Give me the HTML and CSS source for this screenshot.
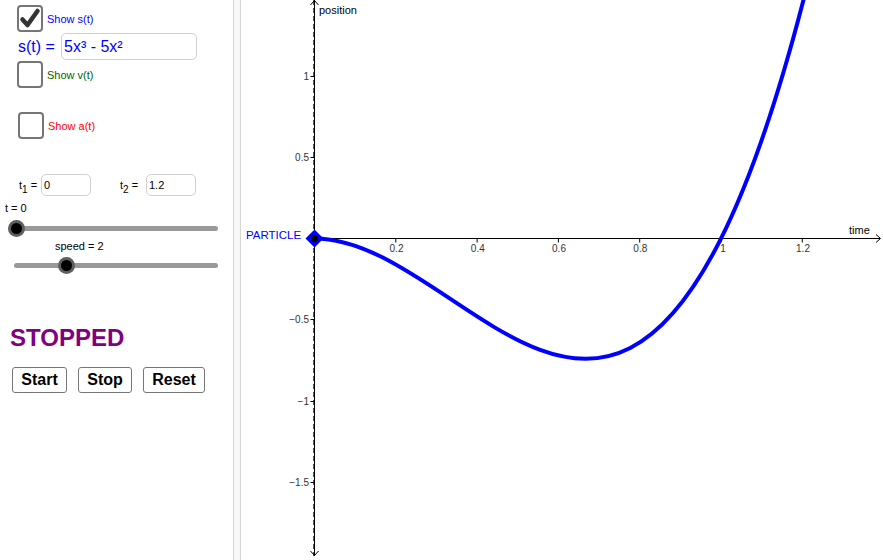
FILE: index.html
```html
<!DOCTYPE html>
<html lang="en">
  <head>
    <meta charset="UTF-8" />
    <title>Particle Motion</title>
    <link rel="stylesheet" href="styles.css">
  </head>
  <body>
    <div class="panel">
      <div class="row row-s">
        <div class="check">
          <svg width="22" height="23" viewBox="0 0 22 23">
            <path d="M3.5 12.5 L8.5 18 L18.5 4" fill="none" stroke="#333" stroke-width="4.5" stroke-linecap="round" stroke-linejoin="round" />
          </svg>
        </div>
        <span class="cap blue">Show s(t)</span>
      </div>

      <div class="row row-func">
        <span class="func-label">s(t) =</span>
        <div class="field field-func">5x³ - 5x²</div>
      </div>

      <div class="row row-v">
        <div class="check"></div>
        <span class="cap green">Show v(t)</span>
      </div>

      <div class="row row-a">
        <div class="check"></div>
        <span class="cap red">Show a(t)</span>
      </div>

      <div class="row row-t">
        <span class="t-label">t<sub>1</sub> =</span>
        <div class="field field-t">0</div>
        <span class="t-label t2">t<sub>2</sub> =</span>
        <div class="field field-t">1.2</div>
      </div>

      <div class="small t0">t = 0</div>
      <div class="slider">
        <div class="track"></div>
        <div class="knob" style="left: 2px"></div>
      </div>

      <div class="small speed">speed = 2</div>
      <div class="slider slider2">
        <div class="track"></div>
        <div class="knob" style="left: 52px"></div>
      </div>

      <div class="status">STOPPED</div>

      <div class="buttons">
        <button class="btn btn-start">Start</button>
        <button class="btn btn-stop">Stop</button>
        <button class="btn btn-reset">Reset</button>
      </div>
    </div>

    <div class="divider"></div>

    <div class="graph">
      <svg width="642" height="560" viewBox="0 0 642 560">
        <!-- dashed line at t = 0 -->
        <line x1="72.5" y1="0" x2="72.5" y2="556" stroke="#555" stroke-width="1" stroke-dasharray="5 3" />

        <!-- axes -->
        <line x1="73.5" y1="238.5" x2="639" y2="238.5" stroke="#000" stroke-width="1" />
        <path d="M635 234.5 L639.5 238.5 L635 242.5" fill="none" stroke="#000" stroke-width="1" />
        <line x1="73.5" y1="0" x2="73.5" y2="556" stroke="#000" stroke-width="1" />
        <path d="M69.5 5 L73.5 0.5 L77.5 5" fill="none" stroke="#000" stroke-width="1" />
        <path d="M69.5 551 L73.5 555.5 L77.5 551" fill="none" stroke="#000" stroke-width="1" />

        <!-- x ticks -->
        <g stroke="#000" stroke-width="1">
          <line x1="154.8" y1="238.5" x2="154.8" y2="242.5" />
          <line x1="236.1" y1="238.5" x2="236.1" y2="242.5" />
          <line x1="317.4" y1="238.5" x2="317.4" y2="242.5" />
          <line x1="398.7" y1="238.5" x2="398.7" y2="242.5" />
          <line x1="480" y1="238.5" x2="480" y2="242.5" />
          <line x1="561.3" y1="238.5" x2="561.3" y2="242.5" />
        </g>
        <g class="tick-text" text-anchor="middle">
          <text x="155.5" y="252">0.2</text>
          <text x="236.8" y="252">0.4</text>
          <text x="318" y="252">0.6</text>
          <text x="399.3" y="252">0.8</text>
          <text x="482" y="252">1</text>
          <text x="562" y="252">1.2</text>
        </g>

        <!-- y ticks -->
        <g stroke="#000" stroke-width="1">
          <line x1="69.5" y1="76.5" x2="73.5" y2="76.5" />
          <line x1="69.5" y1="157.5" x2="73.5" y2="157.5" />
          <line x1="69.5" y1="319.5" x2="73.5" y2="319.5" />
          <line x1="69.5" y1="401.5" x2="73.5" y2="401.5" />
          <line x1="69.5" y1="482.5" x2="73.5" y2="482.5" />
        </g>
        <g class="tick-text" text-anchor="end">
          <text x="68" y="80">1</text>
          <text x="68" y="161">0.5</text>
          <text x="68" y="323">−0.5</text>
          <text x="68" y="405">−1</text>
          <text x="68" y="486">−1.5</text>
        </g>

        <text class="axis-text" x="78" y="14">position</text>
        <text class="axis-text" x="608" y="234">time</text>

        <!-- s(t) = 5t^3 - 5t^2 -->
        <path d="M73.5 238.5 C238.81 238.5 404.12 641.61 569.43 -27.55" fill="none" stroke="#0000ff" stroke-width="4" />

        <!-- particle -->
        <path d="M73.5 229.5 L82.5 238.5 L73.5 247.5 L64.5 238.5 Z" fill="#0000ff" />
        <circle cx="73.5" cy="238.5" r="3.5" fill="#000" />
        <text class="particle" x="5" y="239">PARTICLE</text>
      </svg>
    </div>
  </body>
</html>
```

FILE: styles.css
```css
body {
  margin: 0;
  font-family: 'Liberation Sans', Arial, sans-serif;
  background: #fff;
  color: #000;
  display: flex;
  width: 883px;
  height: 560px;
  overflow: hidden;
}

.panel {
  width: 233px;
  flex-shrink: 0;
}

.divider {
  width: 6px;
  flex-shrink: 0;
  background: #f8f8f8;
  border-left: 1px solid #d6d6d6;
  border-right: 1px solid #d6d6d6;
}

.graph {
  flex: 1;
}

.graph svg {
  display: block;
}

.row {
  display: flex;
  align-items: center;
}

.row-s {
  margin-top: 5px;
  padding-left: 17px;
  height: 27px;
}

.row-func {
  margin-top: 1px;
  padding-left: 18px;
  height: 27px;
}

.row-v {
  margin-top: 1px;
  padding-left: 17px;
  height: 27px;
}

.row-a {
  margin-top: 24px;
  padding-left: 18px;
  height: 27px;
}

.check {
  width: 22px;
  height: 23px;
  border: 2px solid #767676;
  border-radius: 4px;
  background: #fff;
  margin-right: 4px;
}

.check svg {
  display: block;
}

.cap {
  font-size: 11px;
}

.blue {
  color: #0000ff;
}

.green {
  color: #006400;
}

.red {
  color: #ff0000;
}

.func-label {
  font-size: 16px;
  color: #0000ff;
  width: 43px;
}

.field {
  border: 1px solid #d0d0d0;
  border-radius: 5px;
  box-sizing: border-box;
  display: flex;
  align-items: center;
  background: #fff;
}

.field-func {
  width: 136px;
  height: 27px;
  padding-left: 2px;
  font-size: 16px;
  color: #0000ff;
}

.row-t {
  margin-top: 35px;
  height: 22px;
  padding-left: 19px;
}

.t-label {
  font-size: 11px;
  width: 22px;
}

.t-label sub {
  font-size: 10px;
  vertical-align: -4px;
  line-height: 0;
}

.t2 {
  margin-left: 29px;
  width: 26px;
}

.field-t {
  width: 50px;
  height: 22px;
  padding-left: 2px;
  font-size: 11px;
}

.small {
  font-size: 11px;
  height: 13px;
  line-height: 13px;
}

.t0 {
  margin-top: 6px;
  padding-left: 5px;
}

.speed {
  margin-top: 5px;
  padding-left: 55px;
}

.slider {
  position: relative;
  margin-top: 6px;
  margin-left: 14px;
  width: 204px;
  height: 14px;
}

.slider2 {
  margin-top: 5px;
}

.track {
  position: absolute;
  left: 0;
  right: 0;
  top: 5px;
  height: 5px;
  border-radius: 3px;
  background: #999;
}

.knob {
  position: absolute;
  top: 7px;
  width: 11px;
  height: 11px;
  margin-left: -8.5px;
  margin-top: -8.5px;
  border-radius: 50%;
  background: #000;
  border: 3px solid rgba(110, 110, 110, 0.85);
}

.status {
  margin-top: 52px;
  padding-left: 10px;
  height: 28px;
  line-height: 28px;
  font-size: 24px;
  font-weight: bold;
  color: #800080;
}

.buttons {
  margin-top: 15px;
  padding-left: 12px;
  display: flex;
  gap: 11px;
}

.btn {
  height: 26px;
  padding: 0;
  font-family: 'Liberation Sans', Arial, sans-serif;
  font-size: 16px;
  font-weight: bold;
  color: #000;
  background: #fff;
  border: 1.5px solid #777;
  border-radius: 3px;
}

.btn-start {
  width: 55px;
}

.btn-stop {
  width: 54px;
}

.btn-reset {
  width: 62px;
}

.tick-text {
  font-family: 'Liberation Sans', Arial, sans-serif;
  font-size: 10px;
  fill: #333;
}

.axis-text {
  font-family: 'Liberation Sans', Arial, sans-serif;
  font-size: 11px;
  fill: #000;
}

.particle {
  font-family: 'Liberation Sans', Arial, sans-serif;
  font-size: 11.5px;
  fill: #0000ff;
}
```
